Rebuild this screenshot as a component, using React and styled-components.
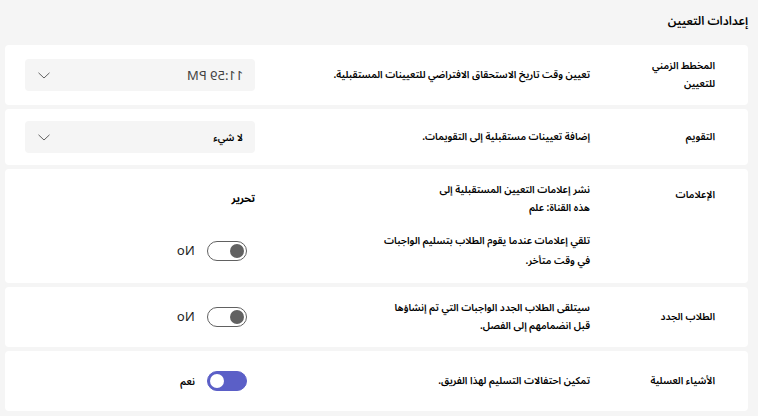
import React from "react";
import styled, { createGlobalStyle } from "styled-components";

const Global = createGlobalStyle`
  html, body { margin: 0; padding: 0; background: #f5f5f5; }
  body {
    font-family: "Noto Sans Arabic", "Noto Naskh Arabic", "DejaVu Sans", sans-serif;
    color: #242424;
  }
  * { box-sizing: border-box; }
`;

const Page = styled.div`
  direction: rtl;
  padding: 12px 10px 4px 5px;
  display: flex;
  flex-direction: column;
  gap: 4px;
`;

const Title = styled.h1`
  margin: 0 0 9px 0;
  font-size: 12px;
  line-height: 20px;
  font-weight: 600;
  color: #000;
`;

const Card = styled.section`
  background: #ffffff;
  border-radius: 4px;
  padding: 12px 33px 12px 20px;
  display: grid;
  grid-template-columns: 75px 285px 230px;
  grid-auto-rows: minmax(${(p) => p.$minRow || 32}px, auto);
  column-gap: 50px;
  row-gap: 14px;
  align-items: center;
`;

const Label = styled.div`
  grid-column: 1;
  grid-row: 1;
  font-size: 10px;
  font-weight: 600;
  line-height: 18px;
  color: #000;
  white-space: nowrap;
  align-self: ${(p) => (p.$top ? "start" : "center")};
  padding-top: ${(p) => (p.$top ? "5px" : "0")};
`;

const Desc = styled.div`
  grid-column: 2;
  font-size: 10px;
  font-weight: 600;
  line-height: ${(p) => p.$lh || 18}px;
  color: #000;
  white-space: nowrap;
`;

const Control = styled.div`
  grid-column: 3;
  display: flex;
  align-items: center;
  justify-content: flex-start;
`;

const Dropdown = styled.button`
  width: 230px;
  height: 32px;
  border: none;
  border-radius: 4px;
  background: #f5f5f5;
  display: flex;
  align-items: center;
  justify-content: space-between;
  padding: 0 12px 0 13px;
  font-family: inherit;
  font-size: 13px;
  color: #424242;
  direction: rtl;
`;

const Mirrored = styled.span`
  display: inline-block;
  direction: ltr;
  transform: scaleX(-1);
  font-family: "Noto Sans", sans-serif;
  font-weight: 400;
`;

const ArabicValue = styled.span`
  font-size: 10px;
  font-weight: 600;
  color: #000;
`;

const EditLink = styled.span`
  font-size: 10.5px;
  font-weight: 700;
  color: #000;
`;

const SwitchGroup = styled.label`
  display: flex;
  align-items: center;
  gap: 12px;
  margin-right: 8px;
`;

const Track = styled.span`
  position: relative;
  width: 40px;
  height: 20px;
  border-radius: 10px;
  border: 1px solid ${(p) => (p.$on ? "#5b5fc7" : "#616161")};
  background: ${(p) => (p.$on ? "#5b5fc7" : "#ffffff")};
  display: inline-block;
`;

const Knob = styled.span`
  position: absolute;
  top: 2px;
  width: 14px;
  height: 14px;
  border-radius: 50%;
  background: ${(p) => (p.$on ? "#ffffff" : "#616161")};
  ${(p) => (p.$on ? "left: 2px;" : "right: 2px;")}
`;

const SwitchText = styled.span`
  font-size: 13px;
  color: #242424;
`;

const ArabicSwitchText = styled.span`
  font-size: 10px;
  font-weight: 600;
  color: #000;
`;

const Chevron = () => (
  <svg width="12" height="7" viewBox="0 0 12 7" fill="none">
    <path d="M0.5 0.8 L6 6 L11.5 0.8" stroke="#616161" strokeWidth="1" />
  </svg>
);

const Toggle = ({ on, children }) => (
  <SwitchGroup>
    <Track $on={on}>
      <Knob $on={on} />
    </Track>
    <SwitchText>{children}</SwitchText>
  </SwitchGroup>
);

export default function App() {
  return (
    <>
      <Global />
      <Page>
        <Title>إعدادات التعيين</Title>

        <Card>
          <Label>
            المخطط الزمني
            <br />
            للتعيين
          </Label>
          <Desc>تعيين وقت تاريخ الاستحقاق الافتراضي للتعيينات المستقبلية.</Desc>
          <Control>
            <Dropdown>
              <Mirrored>11:59 PM</Mirrored>
              <Chevron />
            </Dropdown>
          </Control>
        </Card>

        <Card>
          <Label>التقويم</Label>
          <Desc>إضافة تعيينات مستقبلية إلى التقويمات.</Desc>
          <Control>
            <Dropdown>
              <ArabicValue>لا شيء</ArabicValue>
              <Chevron />
            </Dropdown>
          </Control>
        </Card>

        <Card>
          <Label $top>الإعلامات</Label>
          <Desc>
            نشر إعلامات التعيين المستقبلية إلى
            <br />
            هذه القناة: علم
          </Desc>
          <Control>
            <EditLink>تحرير</EditLink>
          </Control>
          <Desc $lh={20}>
            تلقي إعلامات عندما يقوم الطلاب بتسليم الواجبات
            <br />
            في وقت متأخر.
          </Desc>
          <Control>
            <Toggle on={false}>
              <Mirrored>No</Mirrored>
            </Toggle>
          </Control>
        </Card>

        <Card>
          <Label>الطلاب الجدد</Label>
          <Desc>
            سيتلقى الطلاب الجدد الواجبات التي تم إنشاؤها
            <br />
            قبل انضمامهم إلى الفصل.
          </Desc>
          <Control>
            <Toggle on={false}>
              <Mirrored>No</Mirrored>
            </Toggle>
          </Control>
        </Card>

        <Card $minRow={36}>
          <Label>الأشياء العسلية</Label>
          <Desc>تمكين احتفالات التسليم لهذا الفريق.</Desc>
          <Control>
            <Toggle on>
              <ArabicSwitchText>نعم</ArabicSwitchText>
            </Toggle>
          </Control>
        </Card>
      </Page>
    </>
  );
}
